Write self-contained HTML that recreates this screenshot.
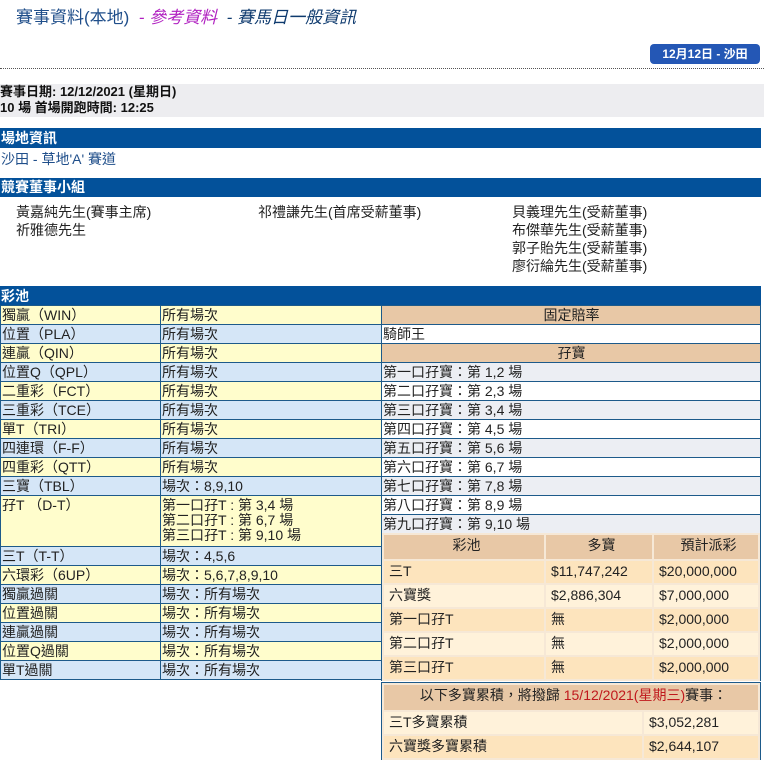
<!DOCTYPE html>
<html><head><meta charset="utf-8"><style>
*{margin:0;padding:0;box-sizing:border-box}
body{width:764px;height:765px;background:#fff;font-family:"Liberation Sans","Noto Sans CJK TC",sans-serif;font-size:13px;color:#222;position:relative;overflow:hidden}
.a{position:absolute}
.bar{position:absolute;left:0;width:761px;background:#03519a;color:#fff;font-weight:bold;font-size:14px;padding-left:1px}
table{border-collapse:collapse;table-layout:fixed}
td{padding:0 0 0 1px;white-space:nowrap;vertical-align:top;line-height:18px;font-size:14px;overflow:hidden}
.L td{border:1px solid #1d5a8a}
.y{background:#fffdcc}.b{background:#d5e6f7}
.R td{border:1px solid #1d5a8a}
.h{background:#e8c8a6;text-align:center}
.g{background:#eceef3}.w{background:#fff}
.J{border-collapse:separate;border-spacing:2px;background:#f6e8d6}
.J td{padding:0 0 0 5px;line-height:20px;font-size:14px}
.j1{background:#fde4bd}.j2{background:#fff2da}.jh{background:#e8c8a6;text-align:center}
</style></head><body>
<div class="a" style="left:16px;top:3px;font-size:17px;color:#1f4e8a;white-space:nowrap">賽事資料(本地) <i style="color:#b020c0">&nbsp;- 參考資料&nbsp;</i> <i style="color:#0e3a6e">- 賽馬日一般資訊</i></div>
<div class="a" style="left:650px;top:44px;width:110px;height:20px;background:#2457b5;border-radius:4px;color:#fff;font-weight:bold;font-size:12px;text-align:center;line-height:20px">12月12日 - 沙田</div>
<div class="a" style="left:0;top:68px;width:764px;border-top:1px dotted #555"></div>
<div class="a" style="left:0;top:84px;width:764px;height:33px;background:#ededf0;font-weight:bold;font-size:13px;line-height:16px;color:#111">賽事日期: 12/12/2021 (星期日)<br>10 場 首場開跑時間: 12:25</div>
<div class="bar" style="top:128px;height:20px;line-height:20px">場地資訊</div>
<div class="a" style="left:1px;top:149px;color:#1f4e8a;font-size:14px">沙田 - 草地'A' 賽道</div>
<div class="bar" style="top:178px;height:19px;line-height:19px">競賽董事小組</div>
<div class="a" style="left:16px;top:203px;line-height:18px;font-size:14px">黃嘉純先生(賽事主席)<br>祈雅德先生</div>
<div class="a" style="left:258px;top:203px;line-height:18px;font-size:14px">祁禮謙先生(首席受薪董事)</div>
<div class="a" style="left:512px;top:203px;line-height:18px;font-size:14px">貝義理先生(受薪董事)<br>布傑華先生(受薪董事)<br>郭子貽先生(受薪董事)<br>廖衍綸先生(受薪董事)</div>
<div class="bar" style="top:286px;height:20px;line-height:20px">彩池</div>
<table class="L a" style="left:0;top:305px;width:381px">
<col style="width:160px"><col style="width:221px">
<tr class="y"><td>獨贏（WIN）</td><td>所有場次</td></tr>
<tr class="b"><td>位置（PLA）</td><td>所有場次</td></tr>
<tr class="y"><td>連贏（QIN）</td><td>所有場次</td></tr>
<tr class="b"><td>位置Q（QPL）</td><td>所有場次</td></tr>
<tr class="y"><td>二重彩（FCT）</td><td>所有場次</td></tr>
<tr class="b"><td>三重彩（TCE）</td><td>所有場次</td></tr>
<tr class="y"><td>單T（TRI）</td><td>所有場次</td></tr>
<tr class="b"><td>四連環（F-F）</td><td>所有場次</td></tr>
<tr class="y"><td>四重彩（QTT）</td><td>所有場次</td></tr>
<tr class="b"><td>三寶（TBL）</td><td>場次：8,9,10</td></tr>
<tr class="y"><td style="height:51px">孖T （D-T）</td><td style="line-height:15px;padding-top:2px">第一口孖T : 第 3,4 場<br>第二口孖T : 第 6,7 場<br>第三口孖T : 第 9,10 場</td></tr>
<tr class="b"><td>三T（T-T）</td><td>場次：4,5,6</td></tr>
<tr class="y"><td>六環彩（6UP）</td><td>場次：5,6,7,8,9,10</td></tr>
<tr class="b"><td>獨贏過關</td><td>場次：所有場次</td></tr>
<tr class="y"><td>位置過關</td><td>場次：所有場次</td></tr>
<tr class="b"><td>連贏過關</td><td>場次：所有場次</td></tr>
<tr class="y"><td>位置Q過關</td><td>場次：所有場次</td></tr>
<tr class="b"><td>單T過關</td><td>場次：所有場次</td></tr>
</table>
<table class="R a" style="left:381px;top:305px;width:380px">
<tr><td class="h">固定賠率</td></tr>
<tr><td class="w">騎師王</td></tr>
<tr><td class="h">孖寶</td></tr>
<tr><td class="g">第一口孖寶：第 1,2 場</td></tr>
<tr><td class="w">第二口孖寶：第 2,3 場</td></tr>
<tr><td class="g">第三口孖寶：第 3,4 場</td></tr>
<tr><td class="w">第四口孖寶：第 4,5 場</td></tr>
<tr><td class="g">第五口孖寶：第 5,6 場</td></tr>
<tr><td class="w">第六口孖寶：第 6,7 場</td></tr>
<tr><td class="g">第七口孖寶：第 7,8 場</td></tr>
<tr><td class="w">第八口孖寶：第 8,9 場</td></tr>
<tr><td class="g">第九口孖寶：第 9,10 場</td></tr>
</table>
<div class="a" style="left:381px;top:533px;width:380px;height:148px;border:1px solid #1d5a8a;border-top:none;background:#f6e8d6">
<table class="J" style="width:378px">
<col style="width:160px"><col style="width:106px"><col>
<tr><td class="jh" style="height:24px">彩池</td><td class="jh">多寶</td><td class="jh">預計派彩</td></tr>
<tr><td class="j1" style="height:22px">三T</td><td class="j1">$11,747,242</td><td class="j1">$20,000,000</td></tr>
<tr><td class="j2" style="height:22px">六寶獎</td><td class="j2">$2,886,304</td><td class="j2">$7,000,000</td></tr>
<tr><td class="j1" style="height:22px">第一口孖T</td><td class="j1">無</td><td class="j1">$2,000,000</td></tr>
<tr><td class="j2" style="height:22px">第二口孖T</td><td class="j2">無</td><td class="j2">$2,000,000</td></tr>
<tr><td class="j1" style="height:22px">第三口孖T</td><td class="j1">無</td><td class="j1">$2,000,000</td></tr>
</table></div>
<div class="a" style="left:381px;top:682px;width:380px;height:78px;border:1px solid #1d5a8a;background:#f6e8d6">
<table class="J" style="width:378px">
<col><col style="width:114px">
<tr><td class="jh" colspan="2" style="height:25px">以下多寶累積，將撥歸 <span style="color:#c0181c">15/12/2021(星期三)</span>賽事：</td></tr>
<tr><td class="j2" style="height:22px">三T多寶累積</td><td class="j2">$3,052,281</td></tr>
<tr><td class="j1" style="height:22px">六寶獎多寶累積</td><td class="j1">$2,644,107</td></tr>
</table></div>
</body></html>
